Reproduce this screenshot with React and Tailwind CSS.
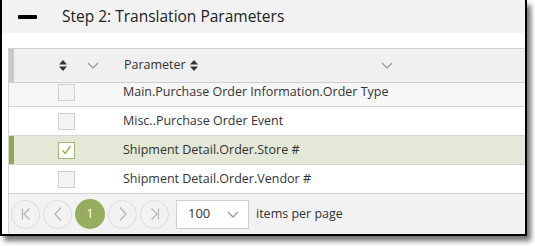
import React from "react";

const rows = [
    { label: "Main.Purchase Order Information.Order Type", alt: true },
    { label: "Misc..Purchase Order Event" },
    { label: "Shipment Detail.Order.Store #", selected: true },
    { label: "Shipment Detail.Order.Vendor #" },
];

function SortIcon() {
    return (
        <svg width="8" height="11" viewBox="0 0 8 11" className="shrink-0">
            <path d="M4 0 L8 4.5 H0 Z" fill="#333" />
            <path d="M4 11 L8 6.5 H0 Z" fill="#333" />
        </svg>
    );
}

function Chevron({ color = "#999" }) {
    return (
        <svg width="12" height="7" viewBox="0 0 12 7" className="shrink-0">
            <path d="M1 1 L6 6 L11 1" fill="none" stroke={color} strokeWidth="1.3" />
        </svg>
    );
}

function PagerButton({ children }) {
    return (
        <div className="w-[29px] h-[29px] rounded-full border border-[#dcdcdc] bg-[#f2f2f2] flex items-center justify-center">
            {children}
        </div>
    );
}

function Checkbox({ checked }) {
    if (checked) {
        return (
            <div className="w-[17px] h-[17px] border border-[#a3b574] bg-white flex items-center justify-center">
                <svg width="11" height="10" viewBox="0 0 11 10">
                    <path d="M1.5 5.5 L4.2 8.3 L9.5 1" fill="none" stroke="#8fb04d" strokeWidth="1.4" />
                </svg>
            </div>
        );
    }
    return <div className="w-[17px] h-[17px] border border-[#cfcfcf] bg-[#f3f3f3]" />;
}

export default function App() {
    return (
        <div className="w-[535px] h-[246px] bg-white overflow-hidden font-['Open_Sans',sans-serif] text-[#333]">
            <div className="w-[527px] h-[236px] border-x-2 border-b-2 border-black shadow-[4px_5px_5px_rgba(0,0,0,0.55)] bg-white flex flex-col">
                <div className="h-[33px] bg-[#f2f2f2] flex items-center shrink-0">
                    <div className="ml-[16px] w-[19px] h-[4px] bg-black rounded-[1px]" />
                    <p className="ml-[25px] text-[15.5px] leading-none text-[#222]">Step 2: Translation Parameters</p>
                </div>
                <div className="h-[15px] shrink-0" />
                <div className="ml-[6px] flex-1 flex flex-col border-l border-[#d4d4d4] min-h-0">
                    <div className="h-[35px] shrink-0 bg-[#f0f0f0] border-y border-[#cfcfcf] flex items-stretch">
                        <div className="w-[5px] bg-[#c9c9c9]" />
                        <div className="w-[66px] flex items-center justify-end pr-[13px]">
                            <SortIcon />
                        </div>
                        <div className="w-[32px] flex items-center pl-[7px]">
                            <Chevron />
                        </div>
                        <div className="flex items-center pl-[12px] gap-[4px] text-[12.5px] text-[#333]">
                            <span>Parameter</span>
                            <SortIcon />
                        </div>
                        <div className="ml-auto mr-[132px] flex items-center">
                            <Chevron />
                        </div>
                    </div>
                    <div className="h-[110px] shrink-0 overflow-hidden">
                        <div className="-mt-[5px]">
                            {rows.map((r) => (
                                <div
                                    key={r.label}
                                    className={`h-[29px] flex items-stretch border-b border-[#d6d6d6] ${r.selected ? "bg-[#e4e8d6]" : r.alt ? "bg-[#f7f7f7]" : "bg-white"}`}
                                >
                                    <div className={`w-[5px] ${r.selected ? "bg-[#8fa65b]" : ""}`} />
                                    <div className="w-[66px] flex items-center justify-end pr-[5px]">
                                        <Checkbox checked={r.selected} />
                                    </div>
                                    <div className="w-[32px]" />
                                    <div className="flex items-center pl-[11px] pt-[1px] text-[12.5px] text-[#333] whitespace-nowrap">
                                        {r.label}
                                    </div>
                                </div>
                            ))}
                        </div>
                    </div>
                    <div className="flex-1 bg-[#f2f2f2] border-t border-[#d0d0d0] flex items-center pl-[2px]">
                        <div className="flex items-center gap-[3px]">
                            <PagerButton>
                                <svg width="10" height="12" viewBox="0 0 10 12">
                                    <path d="M1.5 0.5 V11.5 M8.5 0.5 L3 6 L8.5 11.5" fill="none" stroke="#b5b5b5" strokeWidth="1.2" />
                                </svg>
                            </PagerButton>
                            <PagerButton>
                                <svg width="8" height="14" viewBox="0 0 8 14">
                                    <path d="M7 0.5 L1 7 L7 13.5" fill="none" stroke="#b5b5b5" strokeWidth="1.2" />
                                </svg>
                            </PagerButton>
                            <div className="w-[30px] h-[30px] rounded-full bg-[#96ad5f] flex items-center justify-center text-white text-[13px]">
                                1
                            </div>
                            <PagerButton>
                                <svg width="8" height="14" viewBox="0 0 8 14">
                                    <path d="M1 0.5 L7 7 L1 13.5" fill="none" stroke="#b5b5b5" strokeWidth="1.2" />
                                </svg>
                            </PagerButton>
                            <PagerButton>
                                <svg width="10" height="12" viewBox="0 0 10 12">
                                    <path d="M8.5 0.5 V11.5 M1.5 0.5 L7 6 L1.5 11.5" fill="none" stroke="#b5b5b5" strokeWidth="1.2" />
                                </svg>
                            </PagerButton>
                        </div>
                        <div className="ml-[7px] w-[73px] h-[29px] bg-white border border-[#cfcfcf] flex items-center pl-[11px] pr-[9px] justify-between text-[13px]">
                            <span>100</span>
                            <Chevron />
                        </div>
                        <span className="ml-[7px] text-[12.5px] text-[#333]">items per page</span>
                    </div>
                </div>
            </div>
        </div>
    );
}
